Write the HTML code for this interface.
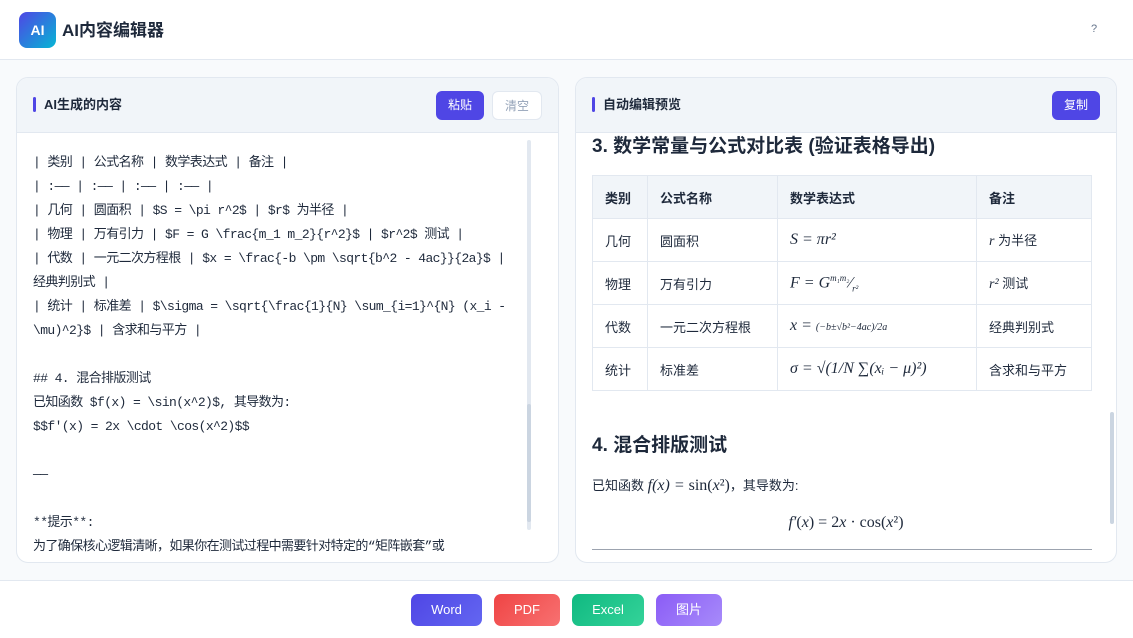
<!DOCTYPE html>
<html><head><meta charset="utf-8"><style>
*{box-sizing:border-box;margin:0;padding:0}
body{width:1133px;height:638px;overflow:hidden;background:#f8fafc;font-family:"Liberation Sans","Noto Sans CJK SC",sans-serif;color:#1e293b;position:relative}
.hdr{position:absolute;left:0;top:0;width:1133px;height:60px;background:#fff;border-bottom:1px solid #e2e8f0}
.logo{position:absolute;left:19px;top:12px;width:37px;height:36px;border-radius:8px;background:linear-gradient(135deg,#4f46e5,#06b6d4);color:#fff;font-weight:bold;font-size:14px;text-align:center;line-height:36px}
.title{position:absolute;left:62px;top:21px;font-size:17px;line-height:20px;font-weight:bold;color:#1e293b}
.help{position:absolute;left:1091px;top:23px;font-size:11px;color:#64748b}
.panel{position:absolute;top:77px;height:486px;background:#fff;border:1px solid #e2e8f0;border-radius:12px;overflow:hidden}
.ph{height:55px;background:#f1f5f9;border-bottom:1px solid #e2e8f0;position:relative}
.ph .bar{position:absolute;left:16px;top:19px;width:3px;height:15px;background:#4f46e5;border-radius:2px}
.ph .t{position:absolute;left:27px;top:18px;font-size:13px;line-height:17px;font-weight:bold}
.btn{position:absolute;top:13px;height:29px;border-radius:6px;font-size:12px;text-align:center;line-height:29px}
.src{position:absolute;left:16px;top:73px;font-family:"Liberation Mono","Noto Sans CJK SC",monospace;font-size:13px;line-height:24px;color:#1e293b;white-space:pre;letter-spacing:-0.6px}
.sb{position:absolute;width:4px;background:#cbd5e1;border-radius:2px}
h3{font-size:19px;font-weight:bold}
table{border-collapse:collapse;font-size:13px;position:absolute;left:16px;width:500px}
td,th{border:1px solid #e2e8f0;padding:0 12px;text-align:left;height:43px}
th{background:#f1f5f9;height:43px;font-weight:bold}
.m{font-family:"Liberation Serif",serif;font-style:italic;font-size:16px}
.foot{position:absolute;left:0;top:580px;width:1133px;height:58px;background:#fff;border-top:1px solid #e2e8f0}
.fb{position:absolute;top:13px;height:32px;border-radius:7px;color:#fff;font-size:13px;text-align:center;line-height:32px}
</style></head><body>
<div class="hdr"><div class="logo">AI</div><div class="title">AI内容编辑器</div><div class="help">?</div></div>

<div class="panel" style="left:16px;width:543px">
<div class="ph"><div class="bar"></div><div class="t">AI生成的内容</div>
<div class="btn" style="left:419px;width:48px;background:#4f46e5;color:#fff">粘贴</div>
<div class="btn" style="left:475px;width:50px;background:#fff;border:1px solid #e2e8f0;color:#94a3b8">清空</div></div>
<div class="src">| 类别 | 公式名称 | 数学表达式 | 备注 |
| :—— | :—— | :—— | :—— |
| 几何 | 圆面积 | $S = \pi r^2$ | $r$ 为半径 |
| 物理 | 万有引力 | $F = G \frac{m_1 m_2}{r^2}$ | $r^2$ 测试 |
| 代数 | 一元二次方程根 | $x = \frac{-b \pm \sqrt{b^2 - 4ac}}{2a}$ |
经典判别式 |
| 统计 | 标准差 | $\sigma = \sqrt{\frac{1}{N} \sum_{i=1}^{N} (x_i -
\mu)^2}$ | 含求和与平方 |

## 4. 混合排版测试
已知函数 $f(x) = \sin(x^2)$, 其导数为:
$$f'(x) = 2x \cdot \cos(x^2)$$

——

**提示**:
为了确保核心逻辑清晰，如果你在测试过程中需要针对特定的“矩阵嵌套”或</div>
<div class="sb" style="left:510px;top:62px;height:390px;background:#e2e8f0"></div>
<div class="sb" style="left:510px;top:326px;height:118px"></div>
</div>

<div class="panel" style="left:575px;width:542px">
<div class="ph"><div class="bar"></div><div class="t">自动编辑预览</div>
<div class="btn" style="left:476px;width:48px;background:#4f46e5;color:#fff">复制</div></div>
<div style="position:absolute;left:0;top:56px;width:540px;height:430px">
<h3 style="position:absolute;left:16px;top:-3px">3. 数学常量与公式对比表 (验证表格导出)</h3>
<table style="top:41px">
<tr><th style="width:55px">类别</th><th style="width:130px">公式名称</th><th style="width:199px">数学表达式</th><th>备注</th></tr>
<tr><td>几何</td><td>圆面积</td><td class="m">S = πr²</td><td><i class="m" style="font-size:14px">r</i> 为半径</td></tr>
<tr><td>物理</td><td>万有引力</td><td class="m">F = G<sup style="font-size:9px">m₁m₂</sup>⁄<sub style="font-size:9px">r²</sub></td><td><i class="m" style="font-size:14px">r²</i> 测试</td></tr>
<tr><td>代数</td><td>一元二次方程根</td><td class="m">x = <span style="font-size:10px">(−b±√b²−4ac)/2a</span></td><td>经典判别式</td></tr>
<tr><td>统计</td><td>标准差</td><td class="m">σ = √(1/N ∑(xᵢ − μ)²)</td><td>含求和与平方</td></tr>
</table>
<h3 style="position:absolute;left:16px;top:296px">4. 混合排版测试</h3>
<div style="position:absolute;left:16px;top:341px;font-size:13px">已知函数 <span class="m">f(x) = </span><span style="font-family:'Liberation Serif',serif;font-size:16px">sin(<i>x</i>²)</span>，其导数为:</div>
<div style="position:absolute;left:0;width:540px;top:380px;text-align:center;font-family:'Liberation Serif',serif;font-size:16px"><i>f′</i>(<i>x</i>) = 2<i>x</i> · cos(<i>x</i>²)</div>
<div style="position:absolute;left:16px;top:415px;width:500px;height:1px;background:#9ca3af"></div>
</div>
<div class="sb" style="left:534px;top:334px;height:112px"></div>
</div>

<div class="foot">
<div class="fb" style="left:411px;width:71px;background:linear-gradient(135deg,#4f46e5,#6366f1)">Word</div>
<div class="fb" style="left:494px;width:66px;background:linear-gradient(135deg,#ef4444,#f87171)">PDF</div>
<div class="fb" style="left:572px;width:72px;background:linear-gradient(135deg,#10b981,#34d399)">Excel</div>
<div class="fb" style="left:656px;width:66px;background:linear-gradient(135deg,#8b5cf6,#a78bfa)">图片</div>
</div>
</body></html>
